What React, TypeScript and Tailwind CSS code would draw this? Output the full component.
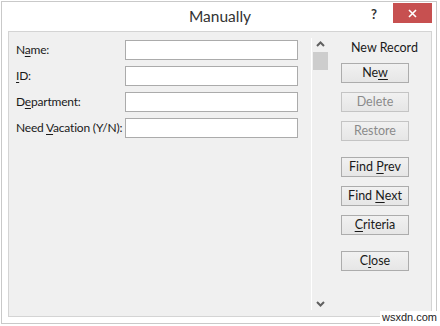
import type { ReactNode } from "react";

function Key({ children }: { children: ReactNode }) {
  return <span className="underline underline-offset-2">{children}</span>;
}

function Btn({ children, disabled }: { children: ReactNode; disabled?: boolean }) {
  return (
    <button
      className={`block h-[20px] w-[68px] whitespace-nowrap border bg-gradient-to-b from-[#f1f1f1] to-[#e6e6e6] text-[12.5px] leading-none ${
        disabled ? "border-[#c4c4c4] text-[#8a8a8a]" : "border-[#acacac] text-[#1a1a1a]"
      }`}
    >
      <span>{children}</span>
    </button>
  );
}

function Chevron({ up }: { up?: boolean }) {
  return (
    <svg width="9" height="6" viewBox="0 0 9 6" className="block">
      <polyline
        points={up ? "1,5 4.5,1.5 8,5" : "1,1 4.5,4.5 8,1"}
        fill="none"
        stroke="#606060"
        strokeWidth="2"
      />
    </svg>
  );
}

export default function App() {
  const rows: { label: ReactNode }[] = [
    { label: <>N<Key>a</Key>me:</> },
    { label: <><Key>I</Key>D:</> },
    { label: <>D<Key>e</Key>partment:</> },
    { label: <>Need <Key>V</Key>acation (Y/N):</> },
  ];

  return (
    <div className="relative h-[326px] w-[440px] bg-white font-['Lato',sans-serif]">
      <div className="ml-[1px] mt-[1px] flex h-[323px] w-[436px] flex-col border border-[#c9c9c9] bg-white">
        <div className="relative flex h-[29px] items-center justify-center">
          <span className="pt-[1px] pl-[2px] text-[15.5px] text-[#333]">Manually</span>
          <span className="absolute left-[369px] top-[3px] text-[13px] font-bold text-[#333]">?</span>
          <div className="absolute left-[391px] top-[1px] flex h-[20px] w-[39px] items-center justify-center bg-[#c75050]">
            <svg width="9" height="9" viewBox="0 0 9 9">
              <path d="M1 1 L8 8 M8 1 L1 8" stroke="#fff" strokeWidth="1.6" />
            </svg>
          </div>
        </div>

        <div className="mb-[6px] ml-[6px] mr-[4px] flex flex-1 border border-[#d4d4d4] bg-[#f0f0f0]">
          <div className="w-[302px] pl-[7px] pt-[8px]">
            <div className="grid grid-cols-[109px_173px] gap-y-[6px]">
              {rows.map((r, i) => (
                <div key={i} className="contents">
                  <div className="flex h-[20px] items-center whitespace-nowrap text-[12px] tracking-[-0.2px] text-[#1a1a1a]">
                    <span>{r.label}</span>
                  </div>
                  <div className="h-[20px] border border-[#ababab] bg-white" />
                </div>
              ))}
            </div>
          </div>

          <div className="my-[6px] flex w-[17px] flex-col items-center border-l border-white">
            <div className="mt-[3px]">
              <Chevron up />
            </div>
            <div className="mt-[5px] h-[18px] w-[15px] bg-[#cdcdcd]" />
            <div className="flex-1" />
            <div className="mb-[3px]">
              <Chevron />
            </div>
          </div>

          <div className="flex flex-col pl-[13px] pt-[8px]">
            <div className="flex h-[16px] items-center justify-center pl-[10px] text-[12.5px] text-[#1a1a1a]">New Record</div>
            <div className="mt-[7px] flex flex-col gap-[9px]">
              <Btn>Ne<Key>w</Key></Btn>
              <Btn disabled>Delete</Btn>
              <Btn disabled>Restore</Btn>
            </div>
            <div className="mt-[16px] flex flex-col gap-[9px]">
              <Btn>Find <Key>P</Key>rev</Btn>
              <Btn>Find <Key>N</Key>ext</Btn>
              <Btn><Key>C</Key>riteria</Btn>
            </div>
            <div className="mt-[16px] flex flex-col">
              <Btn>C<Key>l</Key>ose</Btn>
            </div>
          </div>
        </div>
      </div>
      <span className="absolute left-[380px] top-[310px] whitespace-nowrap bg-white px-[2px] font-['Liberation_Sans',sans-serif] text-[11px] leading-[13px] text-[#222]">
        wsxdn.com
      </span>
    </div>
  );
}
